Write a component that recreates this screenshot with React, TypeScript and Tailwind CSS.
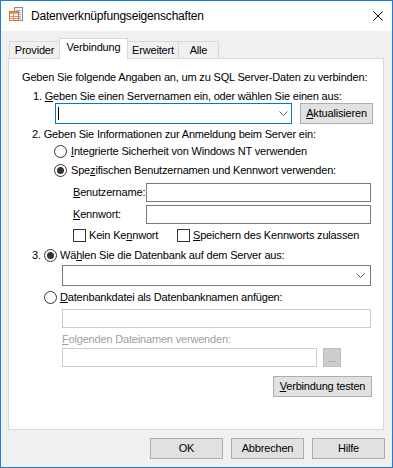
import React from "react";

const U = ({ children }: { children: React.ReactNode }) => (
  <span className="underline decoration-1 underline-offset-[1px]">{children}</span>
);

function Radio({ checked }: { checked?: boolean }) {
  return (
    <span className="flex h-[13px] w-[13px] shrink-0 items-center justify-center rounded-full border border-[#333333] bg-white">
      {checked && <span className="h-[7px] w-[7px] rounded-full bg-[#333333]" />}
    </span>
  );
}

function Check() {
  return <span className="h-[13px] w-[13px] shrink-0 border border-[#333333] bg-white" />;
}

function Chevron() {
  return (
    <svg width="9" height="5" viewBox="0 0 9 5" fill="none">
      <path d="M0.5 0.5 L4.5 4.5 L8.5 0.5" stroke="#606060" strokeWidth="1" />
    </svg>
  );
}

function AppIcon() {
  return (
    <svg width="16" height="16" viewBox="0 0 16 16" fill="none" className="ml-[7px] mb-[2px]">
      <rect x="6.5" y="0.5" width="8" height="13" fill="#f2f2f6" stroke="#8a8a96" />
      <path d="M8 3.5H13M8 5.5H13M8 7.5H13M8 9.5H13M8 11.5H13" stroke="#b0b0c0" />
      <rect x="1.5" y="4.5" width="9" height="9" fill="#ffffff" stroke="#c8783c" />
      <rect x="2" y="5" width="8" height="2" fill="#e89a58" />
      <path d="M5.5 7V13.5M2 9.5H10M2 11.5H10" stroke="#d89060" />
    </svg>
  );
}

function CloseX() {
  return (
    <svg width="10" height="10" viewBox="0 0 10 10" fill="none">
      <path d="M0.5 0.5L9.5 9.5M9.5 0.5L0.5 9.5" stroke="#000000" strokeWidth="1" />
    </svg>
  );
}

export default function App() {
  return (
    <div className="flex h-[468px] w-[393px] flex-col border border-[#1c7ed6] bg-[#f0f0f0] font-['Liberation_Sans',Arial,sans-serif] text-[11px] leading-[13px] tracking-[-0.18px] text-black">
      {/* title bar */}
      <div className="flex h-[30px] shrink-0 items-center bg-white">
        <AppIcon />
        <span className="ml-[7px] whitespace-nowrap text-[12px] leading-[16px] tracking-[-0.2px]">
          Datenverknüpfungseigenschaften
        </span>
        <div className="mb-[1px] ml-auto mr-[9px] flex">
          <CloseX />
        </div>
      </div>

      {/* tabs */}
      <div className="mt-[7px] flex h-[20px] shrink-0 items-end pl-[8px]">
        <div className="flex h-[17px] w-[51px] justify-center border-l border-r border-t border-[#d9d9d9] bg-[#f0f0f0] pt-[2px]">
          Provider
        </div>
        <div className="relative z-10 -mb-px -ml-px flex h-[21px] w-[69px] justify-center border-l border-r border-t border-[#d9d9d9] bg-white pt-[2px]">
          Verbindung
        </div>
        <div className="-ml-px flex h-[17px] w-[52px] justify-center border-l border-r border-t border-[#d9d9d9] bg-[#f0f0f0] pt-[2px]">
          Erweitert
        </div>
        <div className="-ml-px flex h-[17px] w-[41px] justify-center border-l border-r border-t border-[#d9d9d9] bg-[#f0f0f0] pt-[2px]">
          Alle
        </div>
      </div>

      {/* panel */}
      <div className="ml-[7px] flex h-[372px] w-[376px] shrink-0 flex-col border border-[#d9d9d9] bg-white">
        <div className="ml-[13px] mt-[12px] h-[13px] whitespace-nowrap">
          Geben Sie folgende Angaben an, um zu SQL Server-Daten zu verbinden:
        </div>
        <div className="ml-[24px] mt-[6px] h-[13px] whitespace-nowrap">
          1. <U>G</U>eben Sie einen Servernamen ein, oder wählen Sie einen aus:
        </div>
        <div className="ml-[46px] flex h-[21px] gap-[8px]">
          <div className="flex h-[21px] w-[237px] items-center border border-[#0078d7] bg-white">
            <span className="ml-[2px] h-[13px] w-px bg-black" />
            <span className="ml-auto mr-[3px] flex">
              <Chevron />
            </span>
          </div>
          <div className="flex h-[21px] w-[73px] items-center justify-center border border-[#adadad] bg-[#e1e1e1]">
            <span>
              <U>A</U>ktualisieren
            </span>
          </div>
        </div>
        <div className="ml-[23px] mt-[4px] h-[13px] whitespace-nowrap">
          2. Geben Sie Informationen zur Anmeldung beim Server ein:
        </div>
        <div className="ml-[45px] mt-[4px] flex h-[13px] items-center gap-[4px] whitespace-nowrap">
          <Radio />
          <span>
            <U>I</U>ntegrierte Sicherheit von Windows NT verwenden
          </span>
        </div>
        <div className="ml-[45px] mt-[6px] flex h-[13px] items-center gap-[4px] whitespace-nowrap">
          <Radio checked />
          <span>
            Spe<U>z</U>ifischen Benutzernamen und Kennwort verwenden:
          </span>
        </div>
        <div className="ml-[64px] mt-[6px] flex h-[19px] items-center">
          <span className="w-[73px] whitespace-nowrap">
            <U>B</U>enutzername:
          </span>
          <div className="h-[19px] w-[225px] border border-[#7a7a7a] bg-white" />
        </div>
        <div className="ml-[64px] mt-[3px] flex h-[19px] items-center">
          <span className="w-[73px] whitespace-nowrap">
            <U>K</U>ennwort:
          </span>
          <div className="h-[19px] w-[225px] border border-[#7a7a7a] bg-white" />
        </div>
        <div className="ml-[64px] mt-[5px] flex h-[13px] items-center whitespace-nowrap">
          <div className="flex w-[104px] items-center gap-[3px]">
            <Check />
            <span>
              Kein Ke<U>n</U>nwort
            </span>
          </div>
          <div className="flex items-center gap-[3px]">
            <Check />
            <span>
              <U>S</U>peichern des Kennworts zulassen
            </span>
          </div>
        </div>
        <div className="ml-[23px] mt-[7px] flex h-[13px] items-center whitespace-nowrap">
          <span className="w-[12px]">3.</span>
          <Radio checked />
          <span className="ml-[3px]">
            Wä<U>h</U>len Sie die Datenbank auf dem Server aus:
          </span>
        </div>
        <div className="ml-[53px] mt-[3px] flex h-[21px] w-[309px] items-center justify-end border border-[#7a7a7a] bg-white pr-[5px]">
          <Chevron />
        </div>
        <div className="ml-[35px] mt-[5px] flex h-[13px] items-center gap-[3px] whitespace-nowrap">
          <Radio />
          <span>
            <U>D</U>atenbankdatei als Datenbanknamen anfügen:
          </span>
        </div>
        <div className="ml-[53px] mt-[5px] h-[19px] w-[309px] border border-[#cccccc] bg-white" />
        <div className="ml-[53px] mt-[5px] h-[13px] whitespace-nowrap text-[#a0a0a0]">
          <U>F</U>olgenden Dateinamen verwenden:
        </div>
        <div className="ml-[53px] mt-[2px] flex h-[19px] gap-[6px]">
          <div className="h-[19px] w-[255px] border border-[#cccccc] bg-white" />
          <div className="flex h-[19px] w-[18px] items-end justify-center border border-[#bfbfbf] bg-[#cccccc] pb-[2px] text-[9px] leading-[9px] text-[#838383]">
            ...
          </div>
        </div>
        <div className="ml-[264px] mt-[9px] flex h-[21px] w-[99px] items-center justify-center whitespace-nowrap border border-[#adadad] bg-[#e1e1e1]">
          <span>
            <U>V</U>erbindung testen
          </span>
        </div>
      </div>

      {/* bottom buttons */}
      <div className="mt-[8px] flex shrink-0 justify-end gap-[8px] pr-[7px]">
        <div className="flex h-[21px] w-[73px] items-center justify-center border border-[#adadad] bg-[#e1e1e1]">
          OK
        </div>
        <div className="flex h-[21px] w-[73px] items-center justify-center border border-[#adadad] bg-[#e1e1e1]">
          Abbrechen
        </div>
        <div className="flex h-[21px] w-[73px] items-center justify-center border border-[#adadad] bg-[#e1e1e1]">
          Hilfe
        </div>
      </div>
    </div>
  );
}
